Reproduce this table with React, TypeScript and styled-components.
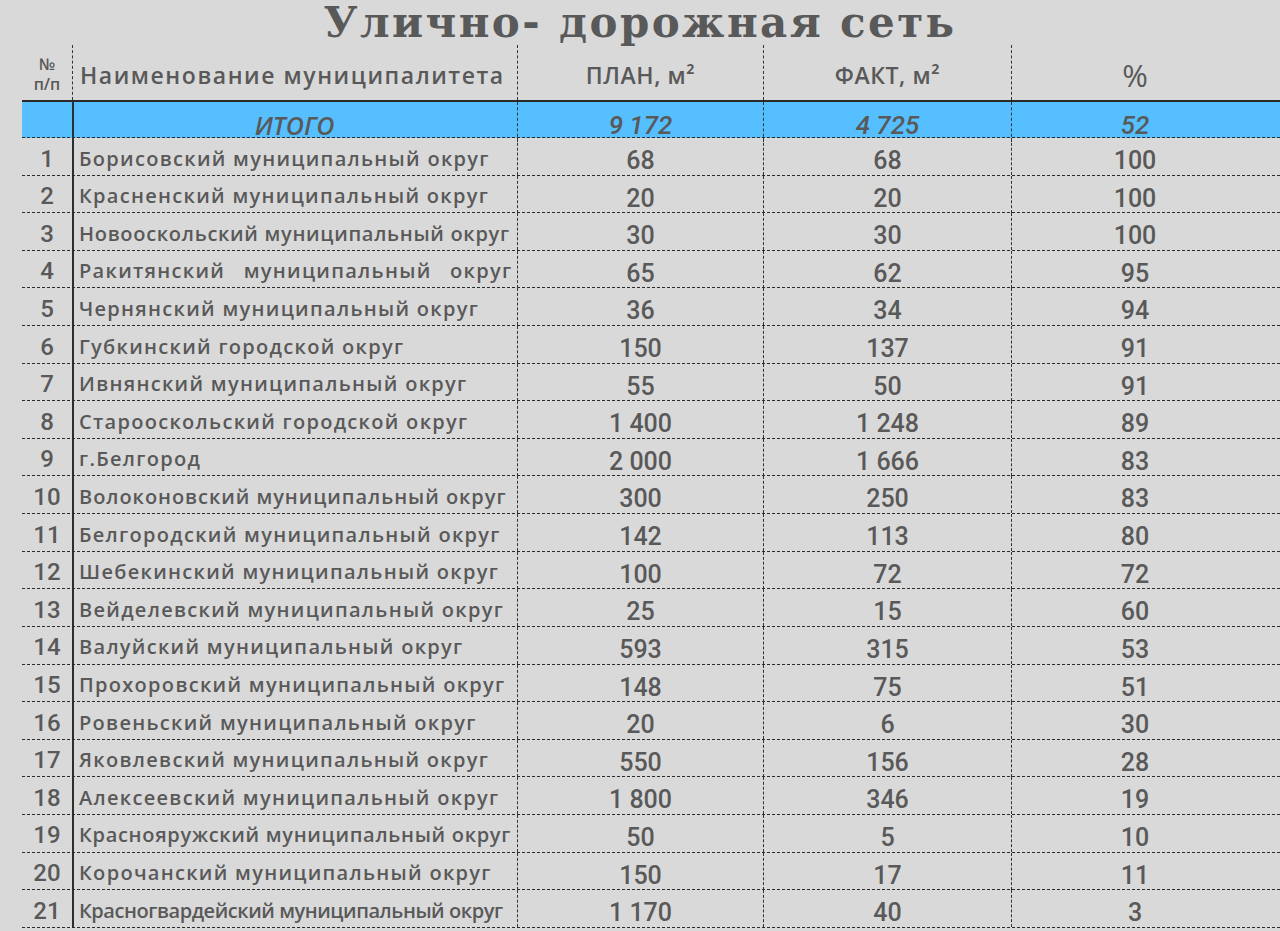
import React from "react";
import styled, { createGlobalStyle, css } from "styled-components";

const GlobalStyle = createGlobalStyle`
  html, body {
    margin: 0;
    padding: 0;
    background: #d9d9d9;
  }
  body {
    width: 1280px;
    height: 931px;
    overflow: hidden;
    font-family: "Open Sans", "Noto Sans", sans-serif;
    color: #595959;
  }
`;

const Page = styled.div`
  width: 1280px;
  height: 931px;
  padding-left: 22px;
  box-sizing: border-box;
  display: flex;
  flex-direction: column;
`;

const Title = styled.h1`
  margin: 0;
  width: 1236px;
  height: 45px;
  text-align: center;
  font-family: "DejaVu Serif", serif;
  font-weight: 700;
  font-size: 42px;
  line-height: 46px;
  color: #595959;
  letter-spacing: 2.4px;
  white-space: nowrap;
`;

const COLS = "50px 445px 246px 248px 247px";

const HeaderRow = styled.div`
  display: grid;
  grid-template-columns: ${COLS};
  height: 57px;
  box-sizing: border-box;
  border-bottom: 2px solid #2a2a2a;
`;

const HeadCell = styled.div<{ $dash?: boolean }>`
  display: flex;
  align-items: center;
  justify-content: center;
  box-sizing: border-box;
  ${(p) => p.$dash && css`border-left: 1px dashed #333;`}
`;

const NumHead = styled(HeadCell)`
  flex-direction: column;
  font-family: "Open Sans", sans-serif;
  font-weight: 600;
  font-size: 16px;
  line-height: 20px;
  padding-top: 2px;
`;

const NameHead = styled(HeadCell)`
  justify-content: flex-start;
  padding-left: 7px;
  padding-top: 4px;
  font-family: "Open Sans", sans-serif;
  font-weight: 600;
  font-size: 23px;
  letter-spacing: 1.55px;
  white-space: nowrap;
`;

const ColHead = styled(HeadCell)<{ $big?: boolean }>`
  padding-top: 4px;
  font-family: "Open Sans", sans-serif;
  font-weight: ${(p) => (p.$big ? 400 : 600)};
  font-size: ${(p) => (p.$big ? "31px" : "23px")};
  letter-spacing: ${(p) => (p.$big ? "0" : "0.6px")};
  white-space: nowrap;
`;

const Row = styled.div<{ $total?: boolean }>`
  display: grid;
  grid-template-columns: ${COLS};
  height: ${(p) => (p.$total ? "36px" : "37.62px")};
  box-sizing: border-box;
  border-bottom: 1px dashed #2a2a2a;
  background: ${(p) => (p.$total ? "#55bfff" : "transparent")};
`;

const IndexCell = styled.div`
  display: flex;
  align-items: center;
  justify-content: center;
  font-family: "Roboto", sans-serif;
  font-weight: 500;
  font-size: 24px;
  padding-top: 4px;
`;

type Fit = "justify" | "squeeze" | "tight" | "snug";

const NameCell = styled.div<{ $fit?: Fit }>`
  display: flex;
  align-items: center;
  box-sizing: border-box;
  border-left: 2px solid #2e2e2e;
  padding-left: 5px;
  padding-top: 3px;
  font-family: "Open Sans", sans-serif;
  font-weight: 600;
  font-size: 20px;
  letter-spacing: 1.3px;
  white-space: nowrap;
  overflow: hidden;
  ${(p) =>
    p.$fit === "justify" &&
    css`
      word-spacing: 12px;
    `}
  ${(p) =>
    p.$fit === "snug" &&
    css`
      letter-spacing: 0.95px;
    `}
  ${(p) =>
    p.$fit === "tight" &&
    css`
      letter-spacing: 0.7px;
    `}
  ${(p) =>
    p.$fit === "squeeze" &&
    css`
      letter-spacing: -0.45px;
    `}
`;

const TotalName = styled.div`
  display: flex;
  align-items: center;
  justify-content: center;
  border-left: 2px solid #2e2e2e;
  font-family: "Open Sans", sans-serif;
  font-weight: 600;
  font-style: italic;
  font-size: 25px;
  padding-top: 6px;
  padding-right: 2px;
`;

const ValueCell = styled.div<{ $italic?: boolean }>`
  display: flex;
  align-items: center;
  justify-content: center;
  box-sizing: border-box;
  border-left: 1px dashed #333;
  font-family: "Roboto", sans-serif;
  font-weight: 500;
  font-size: ${(p) => (p.$italic ? "26px" : "25px")};
  padding-top: ${(p) => (p.$italic ? "6px" : "8px")};
  font-style: ${(p) => (p.$italic ? "italic" : "normal")};
`;

type Item = {
  name: string;
  plan: string;
  fact: string;
  pct: string;
  fit?: Fit;
};

const rows: Item[] = [
  { name: "Борисовский муниципальный округ", plan: "68", fact: "68", pct: "100" },
  { name: "Красненский муниципальный округ", plan: "20", fact: "20", pct: "100" },
  { name: "Новооскольский муниципальный округ", plan: "30", fact: "30", pct: "100", fit: "tight" },
  { name: "Ракитянский муниципальный округ", plan: "65", fact: "62", pct: "95", fit: "justify" },
  { name: "Чернянский муниципальный округ", plan: "36", fact: "34", pct: "94" },
  { name: "Губкинский городской округ", plan: "150", fact: "137", pct: "91" },
  { name: "Ивнянский муниципальный округ", plan: "55", fact: "50", pct: "91" },
  { name: "Старооскольский городской округ", plan: "1 400", fact: "1 248", pct: "89" },
  { name: "г.Белгород", plan: "2 000", fact: "1 666", pct: "83" },
  { name: "Волоконовский муниципальный округ", plan: "300", fact: "250", pct: "83", fit: "snug" },
  { name: "Белгородский муниципальный округ", plan: "142", fact: "113", pct: "80" },
  { name: "Шебекинский муниципальный округ", plan: "100", fact: "72", pct: "72" },
  { name: "Вейделевский муниципальный округ", plan: "25", fact: "15", pct: "60" },
  { name: "Валуйский муниципальный округ", plan: "593", fact: "315", pct: "53" },
  { name: "Прохоровский муниципальный округ", plan: "148", fact: "75", pct: "51" },
  { name: "Ровеньский муниципальный округ", plan: "20", fact: "6", pct: "30" },
  { name: "Яковлевский муниципальный округ", plan: "550", fact: "156", pct: "28" },
  { name: "Алексеевский муниципальный округ", plan: "1 800", fact: "346", pct: "19" },
  { name: "Краснояружский муниципальный округ", plan: "50", fact: "5", pct: "10", fit: "tight" },
  { name: "Корочанский муниципальный округ", plan: "150", fact: "17", pct: "11" },
  { name: "Красногвардейский муниципальный округ", plan: "1 170", fact: "40", pct: "3", fit: "squeeze" },
];

export default function App() {
  return (
    <>
      <GlobalStyle />
      <Page>
        <Title>Улично- дорожная сеть</Title>
        <HeaderRow>
          <NumHead>
            <span>№</span>
            <span>п/п</span>
          </NumHead>
          <NameHead $dash>Наименование муниципалитета</NameHead>
          <ColHead $dash>ПЛАН, м²</ColHead>
          <ColHead $dash>ФАКТ, м²</ColHead>
          <ColHead $dash $big>
            %
          </ColHead>
        </HeaderRow>
        <Row $total>
          <IndexCell />
          <TotalName>ИТОГО</TotalName>
          <ValueCell $italic>9 172</ValueCell>
          <ValueCell $italic>4 725</ValueCell>
          <ValueCell $italic>52</ValueCell>
        </Row>
        {rows.map((r, i) => (
          <Row key={i}>
            <IndexCell>{i + 1}</IndexCell>
            <NameCell $fit={r.fit}>{r.name}</NameCell>
            <ValueCell>{r.plan}</ValueCell>
            <ValueCell>{r.fact}</ValueCell>
            <ValueCell>{r.pct}</ValueCell>
          </Row>
        ))}
      </Page>
    </>
  );
}
